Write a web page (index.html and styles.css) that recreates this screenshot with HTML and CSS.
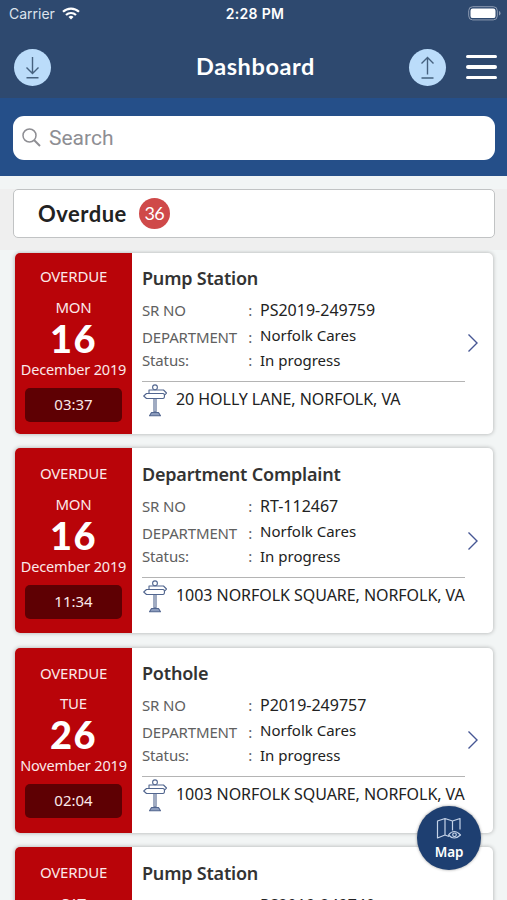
FILE: index.html
```html
<!DOCTYPE html>
<html lang="en">
<head>
  <meta charset="UTF-8" />
  <meta name="viewport" content="width=device-width, initial-scale=1.0"/>
  <title>Dashboard</title>
  <link rel="stylesheet" href="styles.css">
</head>
<body>
  <svg class="sprite" width="0" height="0">
    <symbol id="sign" viewBox="0 0 24 33">
      <g fill="#fff" stroke="#52668f" stroke-width="1.1" stroke-linejoin="round">
        <path d="M11 14h2v14h-2z"/>
        <path d="M6 6h14.500l3 3-3 3H6z"/>
        <path d="M3.500 9.500H20q1.500 0 1.500 2.500T20 14.500H3.500L.7 12z"/>
        <circle cx="12" cy="3.300" r="2.400"/>
        <path fill="#8c9cbd" d="M8.500 28.500h7l2 3.300h-11z"/>
      </g>
    </symbol>
    <symbol id="chevron" viewBox="0 0 12 20">
      <path d="M1.500 1.500 10 10l-8.500 8.500" fill="none" stroke="#465694" stroke-width="1.400"/>
    </symbol>
  </svg>

  <header class="navbar">
    <div class="status-bar">
      <div class="carrier">
        <span>Carrier</span>
        <svg width="18" height="13" viewBox="0 0 18 13" fill="none" stroke="#fff" stroke-width="2.200">
          <path d="M1 4.800a11.500 11.500 0 0 1 16 0M4 8a7.200 7.200 0 0 1 10 0"/>
          <path d="M9 12.500 6.500 10a3.600 3.600 0 0 1 5 0z" fill="#fff" stroke="none"/>
        </svg>
      </div>
      <div class="clock">2:28 PM</div>
      <svg class="battery" width="33" height="15" viewBox="0 0 33 15">
        <rect x=".7" y=".7" width="28.600" height="13.200" rx="4" fill="none" stroke="#8d9bb2"/>
        <rect x="2.500" y="2.500" width="25" height="9.600" rx="2.200" fill="#fff"/>
        <path d="M31 5v4.500q1.500-.5 1.500-2.200T31 5z" fill="#8d9bb2"/>
      </svg>
    </div>
    <div class="title-bar">
      <button class="round-btn">
        <svg width="37" height="37" viewBox="0 0 37 37" fill="none" stroke="#46617f" stroke-width="1.400">
          <path d="M18.500 8v16.500M12.500 18.500l6 6 6-6M12.500 28.700h12"/>
        </svg>
      </button>
      <h1>Dashboard</h1>
      <div class="actions">
        <button class="round-btn">
          <svg width="37" height="37" viewBox="0 0 37 37" fill="none" stroke="#46617f" stroke-width="1.400">
            <path d="M18.500 25.500V8.500M12.500 14.500l6-6 6 6M12.500 29h12"/>
          </svg>
        </button>
        <button class="menu-btn"><i></i><i></i><i></i></button>
      </div>
    </div>
  </header>

  <div class="search-bar">
    <div class="search-box">
      <svg width="19" height="19" viewBox="0 0 19 19" fill="none" stroke="#8e8e93" stroke-width="1.500">
        <circle cx="7.500" cy="7.500" r="6.500"/><path d="m12 12 6 6" stroke-width="1.900"/>
      </svg>
      <span>Search</span>
    </div>
  </div>

  <div class="section">
    <div class="section-box">
      <h2>Overdue</h2>
      <span class="count">36</span>
    </div>
  </div>

  <main class="list">
    <article class="card short">
      <div class="date">
        <span class="late">OVERDUE</span>
        <span class="weekday">MON</span>
        <span class="day">16</span>
        <span class="month">December 2019</span>
        <span class="time">03:37</span>
      </div>
      <div class="details">
        <h3>Pump Station</h3>
        <dl>
          <dt>SR NO</dt><dd class="number">PS2019-249759</dd>
          <dt class="dept">DEPARTMENT</dt><dd>Norfolk Cares</dd>
          <dt>Status:</dt><dd>In progress</dd>
        </dl>
        <div class="address"><svg width="26" height="33"><use href="#sign"/></svg><span>20 HOLLY LANE, NORFOLK, VA</span></div>
      </div>
      <svg class="arrow" width="12" height="20"><use href="#chevron"/></svg>
    </article>

    <article class="card">
      <div class="date">
        <span class="late">OVERDUE</span>
        <span class="weekday">MON</span>
        <span class="day">16</span>
        <span class="month">December 2019</span>
        <span class="time">11:34</span>
      </div>
      <div class="details">
        <h3>Department Complaint</h3>
        <dl>
          <dt>SR NO</dt><dd class="number">RT-112467</dd>
          <dt class="dept">DEPARTMENT</dt><dd>Norfolk Cares</dd>
          <dt>Status:</dt><dd>In progress</dd>
        </dl>
        <div class="address"><svg width="26" height="33"><use href="#sign"/></svg><span>1003 NORFOLK SQUARE, NORFOLK, VA</span></div>
      </div>
      <svg class="arrow" width="12" height="20"><use href="#chevron"/></svg>
    </article>

    <article class="card">
      <div class="date">
        <span class="late">OVERDUE</span>
        <span class="weekday">TUE</span>
        <span class="day">26</span>
        <span class="month">November 2019</span>
        <span class="time">02:04</span>
      </div>
      <div class="details">
        <h3>Pothole</h3>
        <dl>
          <dt>SR NO</dt><dd class="number">P2019-249757</dd>
          <dt class="dept">DEPARTMENT</dt><dd>Norfolk Cares</dd>
          <dt>Status:</dt><dd>In progress</dd>
        </dl>
        <div class="address"><svg width="26" height="33"><use href="#sign"/></svg><span>1003 NORFOLK SQUARE, NORFOLK, VA</span></div>
      </div>
      <svg class="arrow" width="12" height="20"><use href="#chevron"/></svg>
    </article>

    <article class="card">
      <div class="date">
        <span class="late">OVERDUE</span>
        <span class="weekday">SAT</span>
      </div>
      <div class="details">
        <h3>Pump Station</h3>
        <dl>
          <dt>SR NO</dt><dd class="number">PS2019-249740</dd>
        </dl>
      </div>
    </article>
  </main>

  <button class="map-btn">
    <svg width="26" height="24" viewBox="0 0 26 24" fill="none" stroke="#c5d3e8" stroke-width="1.200" stroke-linejoin="round">
      <path d="M13 19.500 9 18l-7.500 3V4L9 1.500 16.500 4 24 1.500v11M9 1.500V18M16.500 4v9.500"/>
      <path d="M12.500 18q5.500-7 12 0-6.500 6-12 0z"/><circle cx="18.500" cy="17.800" r="1.800"/>
    </svg>
    <span>Map</span>
  </button>
</body>
</html>
```
FILE: styles.css
```css
* {
  box-sizing: border-box;
}

body {
  margin: 0;
  height: 900px;
  overflow: hidden;
  background-color: #f2f5f5;
  font-family: "Noto Sans", sans-serif;
  color: #222;
}

h1, h2, h3, dl, dd {
  margin: 0;
}

button {
  border: none;
  padding: 0;
}

svg {
  display: block;
  flex: none;
}

.sprite {
  position: absolute;
}

.navbar {
  height: 98px;
  background-color: #2e496f;
  color: #fff;
}

.status-bar {
  display: grid;
  grid-template-columns: 1fr auto 1fr;
  align-items: center;
  height: 27px;
  padding: 0 6px 0 9px;
  font-family: Inter, sans-serif;
  font-size: 14px;
}

.carrier {
  display: flex;
  align-items: center;
  gap: 7px;
  color: #dde3ec;
}

.clock {
  font-weight: 600;
  letter-spacing: 0.3px;
}

.battery {
  justify-self: end;
}

.title-bar {
  display: grid;
  grid-template-columns: 1fr auto 1fr;
  align-items: center;
  height: 80px;
  padding: 0 10px 0 14px;
}

.title-bar h1 {
  font: 700 23.5px/30px Lato, sans-serif;
  letter-spacing: 0.6px;
  padding-bottom: 2px;
}

.round-btn {
  width: 37px;
  height: 37px;
  border-radius: 50%;
  background-color: #bbdcfa;
}

.actions {
  display: flex;
  justify-content: flex-end;
  align-items: center;
  gap: 20px;
}

.menu-btn {
  display: flex;
  flex-direction: column;
  gap: 7px;
  width: 31px;
  background: none;
}

.menu-btn i {
  height: 3.5px;
  border-radius: 2px;
  background-color: #fff;
}

.search-bar {
  height: 78px;
  padding: 17.5px 12px 0 13px;
  background-color: #254f89;
}

.search-box {
  display: flex;
  align-items: center;
  gap: 8px;
  height: 44px;
  padding-left: 9px;
  border-radius: 11px;
  background-color: #fff;
  color: #8e8e93;
  font: 21px/44px Roboto, sans-serif;
}

.section {
  height: 61px;
  margin-top: 13px;
  padding: 0 12px 0 13px;
  background-color: #efefef;
}

.section-box {
  display: flex;
  align-items: center;
  gap: 12px;
  height: 49px;
  padding-left: 24px;
  border: 1.5px solid #c1c3c4;
  border-radius: 5px;
  background-color: #fff;
}

.section-box h2 {
  font: 700 22px/30px Lato, sans-serif;
  letter-spacing: 0.5px;
}

.count {
  width: 31px;
  height: 31px;
  border-radius: 50%;
  background-color: #cf4949;
  color: #fff;
  font: 18px/31px Lato, sans-serif;
  letter-spacing: -0.5px;
  text-align: center;
}

.list {
  display: flex;
  flex-direction: column;
  gap: 14.5px;
  height: 650px;
  padding: 2.5px 14px 0 15px;
  overflow: hidden;
}

.card {
  display: flex;
  flex: none;
  height: 185px;
  border-radius: 5px;
  background-color: #fff;
  box-shadow: 0 0 4px rgba(0, 0, 0, 0.3);
  overflow: hidden;
}

.card.short {
  height: 181px;
}

.date {
  display: flex;
  flex-direction: column;
  align-items: center;
  width: 117px;
  padding-top: 13px;
  background-color: #b90409;
  color: #fbe9e9;
  font-size: 15px;
  line-height: 24px;
  letter-spacing: -0.2px;
  white-space: nowrap;
}

.short .date {
  padding-top: 11.5px;
}

.weekday {
  margin-top: 6.5px;
}

.day {
  height: 38px;
  color: #fff;
  font: 900 38px/38px Lato, sans-serif;
  letter-spacing: 1.5px;
}

.month {
  font-size: 14.5px;
  letter-spacing: -0.15px;
}

.time {
  width: 97px;
  height: 34px;
  margin-top: 7px;
  border-radius: 5px;
  background-color: #5e0003;
  letter-spacing: 0;
  line-height: 32px;
  text-align: center;
}

.details {
  width: 323px;
  margin-left: 10px;
}

.details h3 {
  margin-top: 12.5px;
  font-size: 18px;
  font-weight: 600;
  line-height: 26px;
  letter-spacing: -0.2px;
  color: #333;
}

.details dl {
  display: grid;
  grid-template-columns: 118px 1fr;
  grid-auto-rows: 25px;
  height: 91px;
  padding-top: 7px;
  border-bottom: 1.5px solid #b4b4b4;
  font-size: 15px;
  line-height: 25px;
}

.details dt {
  display: flex;
  justify-content: space-between;
  padding-right: 8px;
  color: #606060;
  letter-spacing: -0.15px;
}

.details dt::after {
  content: ":";
}

.details .dept {
  padding-top: 2px;
}

.details .number {
  font-size: 16px;
}

.address {
  display: flex;
  gap: 8px;
  padding-top: 2px;
  font-size: 16px;
  line-height: 30px;
  letter-spacing: -0.05px;
  white-space: nowrap;
}

.arrow {
  align-self: center;
  margin-left: 2px;
}

/* floats over the list */
.map-btn {
  position: absolute;
  left: 417px;
  top: 806px;
  display: flex;
  flex-direction: column;
  align-items: center;
  width: 64px;
  height: 64px;
  padding-top: 11px;
  border-radius: 50%;
  background-color: #1e3f71;
  box-shadow: 0 0 3px rgba(0, 0, 0, 0.4);
  color: #fff;
  font: 600 13.5px/22px "Noto Sans", sans-serif;
  letter-spacing: -0.2px;
}
```
